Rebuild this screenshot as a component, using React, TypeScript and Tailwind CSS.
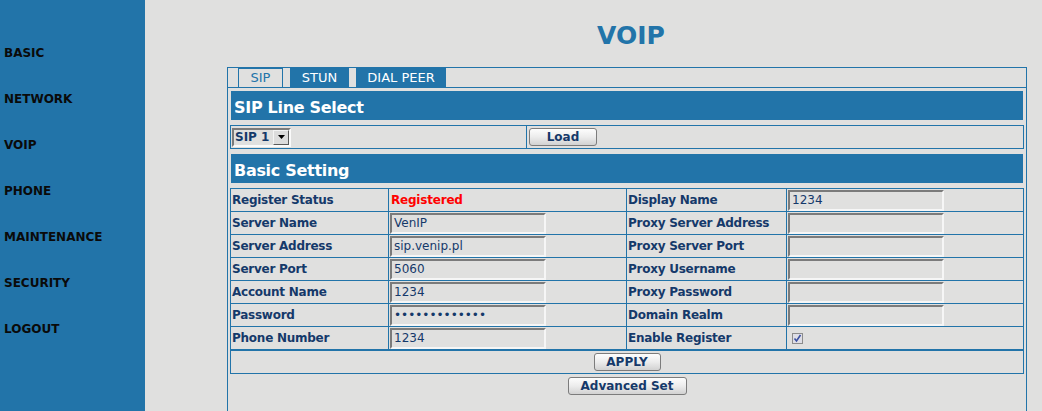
import React from 'react';

const BLUE = 'border-[#2274a9]';

type Value =
  | { kind: 'status'; text: string }
  | { kind: 'input'; text: string }
  | { kind: 'check' };

const rows: [string, Value, string, Value][] = [
  ['Register Status', { kind: 'status', text: 'Registered' }, 'Display Name', { kind: 'input', text: '1234' }],
  ['Server Name', { kind: 'input', text: 'VenIP' }, 'Proxy Server Address', { kind: 'input', text: '' }],
  ['Server Address', { kind: 'input', text: 'sip.venip.pl' }, 'Proxy Server Port', { kind: 'input', text: '' }],
  ['Server Port', { kind: 'input', text: '5060' }, 'Proxy Username', { kind: 'input', text: '' }],
  ['Account Name', { kind: 'input', text: '1234' }, 'Proxy Password', { kind: 'input', text: '' }],
  ['Password', { kind: 'input', text: '•••••••••••••' }, 'Domain Realm', { kind: 'input', text: '' }],
  ['Phone Number', { kind: 'input', text: '1234' }, 'Enable Register', { kind: 'check' }],
];

const menu = ['BASIC', 'NETWORK', 'VOIP', 'PHONE', 'MAINTENANCE', 'SECURITY', 'LOGOUT'];

const Button: React.FC<{ label: string; width: string }> = ({ label, width }) => (
  <button
    className={`${width} h-[18px] rounded-[3px] border border-[#7c7c7c] bg-gradient-to-b from-[#fdfdfd] via-[#ececec] to-[#d2d2d2] text-[12px] leading-[14px] font-bold text-[#15396a]`}
  >
    {label}
  </button>
);

const TextBox: React.FC<{ value: string }> = ({ value }) => (
  <div className="ml-[1px] flex h-[21px] w-[156px] items-center border-2 border-t-[#7b7b7b] border-l-[#7b7b7b] border-b-[#f6f6f6] border-r-[#f6f6f6] bg-[#e0e0df] pl-[2px] text-[12px] text-[#15396a]">
    {value}
  </div>
);

const Checkbox: React.FC = () => (
  <div className="ml-[5px] flex h-[11px] w-[11px] items-center justify-center border border-[#8c8c8c] bg-[#dedee6]">
    <svg width="9" height="9" viewBox="0 0 9 9">
      <path d="M1.5 4.5 L3.5 7 L7.5 1" fill="none" stroke="#3a4fa0" strokeWidth="1.6" />
    </svg>
  </div>
);

const renderValue = (v: Value) => {
  if (v.kind === 'status')
    return <span className="pl-[2px] text-[12px] font-bold tracking-[-0.2px] text-[#ff0000]">{v.text}</span>;
  if (v.kind === 'check') return <Checkbox />;
  return <TextBox value={v.text} />;
};

const Label: React.FC<{ text: string }> = ({ text }) => (
  <span className="pl-[1px] text-[12px] font-bold tracking-[-0.25px] text-[#15396a]">{text}</span>
);

const Cell: React.FC<{ children: React.ReactNode }> = ({ children }) => (
  <div className={`flex h-[23px] items-center overflow-hidden border-r border-b ${BLUE}`}>{children}</div>
);

const SectionBar: React.FC<{ title: string }> = ({ title }) => (
  <div className="mx-[3px] h-[29px] bg-[#2274a9] pt-[8px] pl-[3px] text-[16px] leading-[18px] font-bold tracking-[-0.3px] text-white">
    {title}
  </div>
);

export default function App() {
  return (
    <div className="flex h-[411px] overflow-hidden bg-[#e0e0df] font-['DejaVu_Sans',sans-serif]">
      <aside className="w-[145px] shrink-0 bg-[#2274a9] pt-[30px]">
        {menu.map((item) => (
          <div key={item} className="flex h-[46px] items-center pl-[4px] text-[12px] font-bold text-[#0a0a0a]">
            {item}
          </div>
        ))}
      </aside>

      <main className="flex-1">
        <div className="ml-[82px] mr-[15px] h-[67px] pt-[23px] pl-[8px] text-center text-[25px] leading-[25px] font-bold text-[#2274a9]">
          VOIP
        </div>

        <div className={`ml-[82px] mr-[15px] border ${BLUE} pb-[30px]`}>
          {/* tabs */}
          <div className={`flex h-[20px] gap-[7px] border-b ${BLUE} pl-[10px]`}>
            <div className={`flex h-[19px] w-[45px] items-center justify-center border border-b-0 ${BLUE} text-[13px] text-[#2274a9]`}>
              SIP
            </div>
            <div className="flex h-[19px] w-[59px] items-center justify-center bg-[#2274a9] text-[13px] text-white">STUN</div>
            <div className="flex h-[19px] w-[90px] items-center justify-center bg-[#2274a9] text-[13px] text-white">DIAL PEER</div>
          </div>

          <div className="mt-[3px]">
            <SectionBar title="SIP Line Select" />
          </div>

          <div className={`mx-[2px] mt-[5px] flex h-[24px] border ${BLUE}`}>
            <div className={`flex w-[296px] items-center border-r ${BLUE} pl-[1px]`}>
              <div className="flex h-[19px] w-[59px] items-center border-2 border-t-[#7b7b7b] border-l-[#7b7b7b] border-b-[#fafafa] border-r-[#fafafa] bg-[#e0e0df]">
                <span className="flex-1 pl-[1px] text-[12px] font-bold text-[#15396a]">SIP 1</span>
                <span className="flex h-[15px] w-[16px] items-center justify-center border border-t-[#f4f4f4] border-l-[#f4f4f4] border-b-[#5a5a5a] border-r-[#5a5a5a] bg-[#dcdcdc]">
                  <svg width="7" height="4" viewBox="0 0 7 4">
                    <path d="M0 0 H7 L3.5 4 Z" fill="#000" />
                  </svg>
                </span>
              </div>
            </div>
            <div className="flex flex-1 items-center pl-[2px]">
              <Button label="Load" width="w-[68px]" />
            </div>
          </div>

          <div className="mt-[5px]">
            <SectionBar title="Basic Setting" />
          </div>

          <div className={`mx-[2px] mt-[5px] grid grid-cols-[158px_238px_160px_1fr] border-l border-t ${BLUE}`}>
            {rows.map(([l1, v1, l2, v2]) => (
              <React.Fragment key={l1}>
                <Cell>
                  <Label text={l1} />
                </Cell>
                <Cell>{renderValue(v1)}</Cell>
                <Cell>
                  <Label text={l2} />
                </Cell>
                <Cell>{renderValue(v2)}</Cell>
              </React.Fragment>
            ))}
          </div>

          <div className={`mx-[2px] flex h-[24px] items-center justify-center border ${BLUE}`}>
            <Button label="APPLY" width="w-[67px]" />
          </div>

          <div className="mt-[3px] flex justify-center">
            <Button label="Advanced Set" width="w-[119px]" />
          </div>
        </div>
      </main>
    </div>
  );
}
